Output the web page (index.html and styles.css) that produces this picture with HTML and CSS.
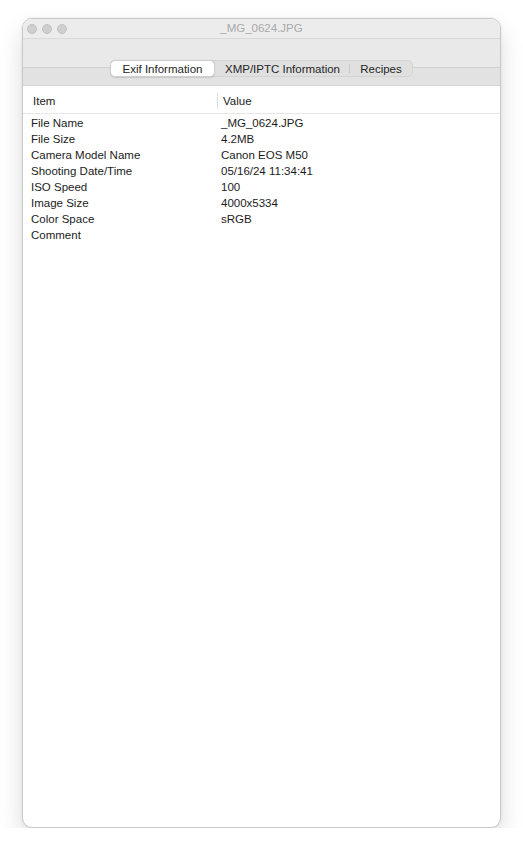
FILE: index.html
```html
<!DOCTYPE html>
<html>
<head>
<meta charset="utf-8">
<link rel="stylesheet" href="styles.css">
</head>
<body>
<div class="window">
  <div class="titlebar">
    <div class="lights"><span></span><span></span><span></span></div>
    <div class="title">_MG_0624.JPG</div>
  </div>
  <div class="toolbar">
    <div class="segmented">
      <div class="seg seg-exif active">Exif Information</div>
      <div class="seg seg-xmp">XMP/IPTC Information</div>
      <div class="seg seg-rec">Recipes</div>
    </div>
  </div>
  <div class="table">
    <div class="thead">
      <div class="th th-item">Item</div>
      <div class="th th-value">Value</div>
    </div>
    <div class="tbody">
      <div class="row"><div class="c1">File Name</div><div class="c2">_MG_0624.JPG</div></div>
      <div class="row"><div class="c1">File Size</div><div class="c2">4.2MB</div></div>
      <div class="row"><div class="c1">Camera Model Name</div><div class="c2">Canon EOS M50</div></div>
      <div class="row"><div class="c1">Shooting Date/Time</div><div class="c2">05/16/24 11:34:41</div></div>
      <div class="row"><div class="c1">ISO Speed</div><div class="c2">100</div></div>
      <div class="row"><div class="c1">Image Size</div><div class="c2">4000x5334</div></div>
      <div class="row"><div class="c1">Color Space</div><div class="c2">sRGB</div></div>
      <div class="row"><div class="c1">Comment</div><div class="c2"></div></div>
    </div>
  </div>
</div>
</body>
</html>
```

FILE: styles.css
```css
html, body {
  margin: 0;
  padding: 0;
  background: #ffffff;
}
body {
  font-family: "Liberation Sans", Arial, sans-serif;
  font-size: 11.5px;
  color: #1c1c1c;
  padding: 18px 0 0 22px;
}
.window {
  width: 479px;
  height: 810px;
  box-sizing: border-box;
  border: 1px solid #c9c9c9;
  border-radius: 10px;
  overflow: hidden;
  background: #ffffff;
  box-shadow: 0 12px 24px rgba(0,0,0,0.14), 0 0 3px rgba(0,0,0,0.08);
  display: flex;
  flex-direction: column;
}
.titlebar {
  height: 19px;
  background: #ececec;
  border-bottom: 1px solid #d9d9d9;
  display: flex;
  align-items: center;
  position: relative;
}
.lights {
  display: flex;
  gap: 5px;
  padding-left: 4px;
}
.lights span {
  width: 10px;
  height: 10px;
  border-radius: 50%;
  background: #cfcfcf;
  border: 0.5px solid #c0c0c0;
  box-sizing: border-box;
}
.title {
  position: absolute;
  left: 0;
  right: 0;
  top: 3px;
  text-align: center;
  color: #a9a9a9;
  font-size: 11.5px;
}
.toolbar {
  height: 47px;
  border-bottom: 1px solid #d4d4d4;
  background: linear-gradient(to bottom, #e9e9e9 0, #e9e9e9 28px, #d2d2d2 28px, #d2d2d2 29px, #e2e2e2 29px, #e2e2e2 100%);
  display: flex;
  justify-content: center;
  padding-top: 21px;
  box-sizing: border-box;
}
.segmented {
  display: flex;
  height: 15px;
  background: #e0e0e0;
  border: 1px solid #d3d3d3;
  border-radius: 5px;
}
.seg {
  display: flex;
  align-items: center;
  justify-content: center;
  color: #262626;
  position: relative;
}
.seg-exif { width: 103px; }
.seg-xmp { width: 135px; }
.seg-rec { width: 62px; }
.seg.active {
  background: #ffffff;
  border-radius: 5px;
  margin: -1px 0 -1px -1px;
  border: 1px solid #cfcfcf;
  box-shadow: 0 0.5px 1px rgba(0,0,0,0.12);
}
.seg-xmp::after {
  content: "";
  position: absolute;
  right: 0;
  top: 3px;
  bottom: 3px;
  width: 1px;
  background: #c8c8c8;
}
.table {
  flex: 1;
  display: flex;
  flex-direction: column;
}
.thead {
  height: 28px;
  box-sizing: border-box;
  padding-top: 2px;
  display: flex;
  align-items: center;
  border-bottom: 1px solid #e6e6e6;
}
.th-item {
  width: 184px;
  padding-left: 10px;
}
.th-value {
  border-left: 1px solid #dcdcdc;
  padding-left: 5px;
  line-height: 16px;
}
.tbody {
  padding-top: 1px;
}
.row {
  display: flex;
  height: 16px;
  line-height: 16px;
}
.c1 {
  width: 186px;
  padding-left: 8px;
}
.c2 {
  padding-left: 4px;
}
```
